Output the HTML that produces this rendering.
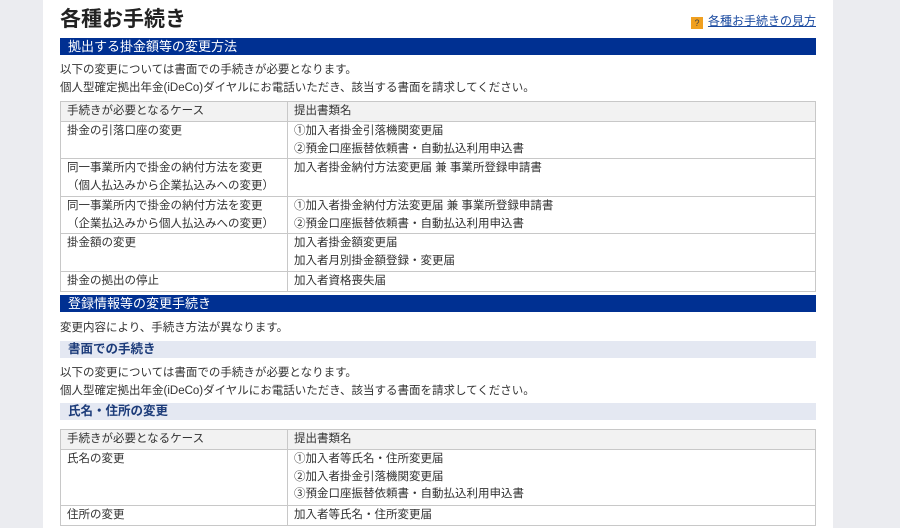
<!DOCTYPE html>
<html><head><meta charset="utf-8"><style>
*{margin:0;padding:0;box-sizing:border-box}
body{width:900px;height:528px;overflow:hidden;background:#ebecf0;font-family:"Liberation Sans","Noto Sans CJK JP",sans-serif;font-size:11.5px;color:#333}
#main{position:absolute;left:43px;top:0;width:790px;height:528px;background:#fff}
.a{position:absolute;left:60px;width:756px}
h1{position:absolute;left:60px;top:3px;font-size:21px;font-weight:bold;color:#222}
.help{position:absolute;right:84px;top:12px;font-size:12px;color:#1a4aa0;text-decoration:underline}
.help i{display:inline-block;width:12px;height:12px;background:#f0a020;color:#444;font-style:normal;font-size:9px;line-height:12px;text-align:center;margin-right:5px;vertical-align:-1px;text-decoration:none}
.bar{height:17px;background:#003092;color:#fff;font-size:13px;line-height:17px;padding-left:8px}
.sub{height:17px;background:#e4e8f2;color:#1d3c7a;font-weight:bold;font-size:12.5px;line-height:17px;padding-left:8px}
.t{line-height:17.5px}
table{border-collapse:collapse;width:756px}
td{border:1px solid #c8c8c8;padding:0 6px;vertical-align:top;line-height:17.5px;padding-top:1px}
td:first-child{width:227px}
tr.h td{background:#f2f2f2;height:20px}
</style></head><body>
<div id="main"></div>
<h1>各種お手続き</h1>
<div class="help"><i>?</i>各種お手続きの見方</div>
<div class="a bar" style="top:38px">拠出する掛金額等の変更方法</div>
<div class="a t" style="top:62px">以下の変更については書面での手続きが必要となります。<br>個人型確定拠出年金(iDeCo)ダイヤルにお電話いただき、該当する書面を請求してください。</div>
<table class="a" style="top:101px">
<tr class="h"><td>手続きが必要となるケース</td><td>提出書類名</td></tr>
<tr style="height:37px"><td>掛金の引落口座の変更</td><td>①加入者掛金引落機関変更届<br>②預金口座振替依頼書・自動払込利用申込書</td></tr>
<tr style="height:38px"><td>同一事業所内で掛金の納付方法を変更<br>（個人払込みから企業払込みへの変更）</td><td>加入者掛金納付方法変更届 兼 事業所登録申請書</td></tr>
<tr style="height:37px"><td>同一事業所内で掛金の納付方法を変更<br>（企業払込みから個人払込みへの変更）</td><td>①加入者掛金納付方法変更届 兼 事業所登録申請書<br>②預金口座振替依頼書・自動払込利用申込書</td></tr>
<tr style="height:38px"><td>掛金額の変更</td><td>加入者掛金額変更届<br>加入者月別掛金額登録・変更届</td></tr>
<tr style="height:20px"><td>掛金の拠出の停止</td><td>加入者資格喪失届</td></tr>
</table>
<div class="a bar" style="top:295px">登録情報等の変更手続き</div>
<div class="a t" style="top:320px">変更内容により、手続き方法が異なります。</div>
<div class="a sub" style="top:341px">書面での手続き</div>
<div class="a t" style="top:365px">以下の変更については書面での手続きが必要となります。<br>個人型確定拠出年金(iDeCo)ダイヤルにお電話いただき、該当する書面を請求してください。</div>
<div class="a sub" style="top:403px">氏名・住所の変更</div>
<table class="a" style="top:429px">
<tr class="h"><td>手続きが必要となるケース</td><td>提出書類名</td></tr>
<tr style="height:56px"><td>氏名の変更</td><td>①加入者等氏名・住所変更届<br>②加入者掛金引落機関変更届<br>③預金口座振替依頼書・自動払込利用申込書</td></tr>
<tr style="height:20px"><td>住所の変更</td><td>加入者等氏名・住所変更届</td></tr>
</table>
</body></html>
